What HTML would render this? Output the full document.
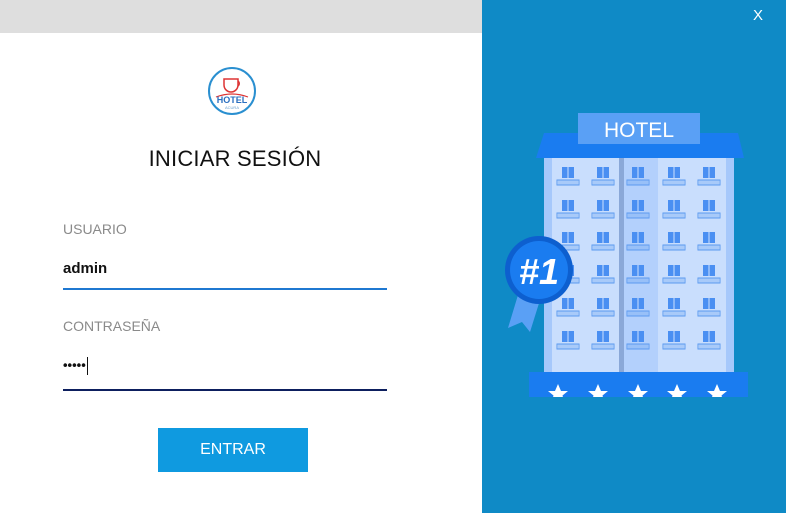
<!DOCTYPE html>
<html><head><meta charset="utf-8"><style>
*{margin:0;padding:0;box-sizing:border-box}
body{width:786px;height:513px;overflow:hidden;background:#fff;font-family:"Liberation Sans",sans-serif;position:relative}
.top{position:absolute;left:0;top:0;width:482px;height:33px;background:#dedede}
.right{position:absolute;left:482px;top:0;width:304px;height:513px;background:#0f8ac6}
.x{position:absolute;left:753px;top:7px;color:#fff;font-size:15px}
h1{position:absolute;left:0;width:470px;text-align:center;top:146px;font-weight:normal;font-size:22px;color:#111;letter-spacing:0.2px}
.lbl{position:absolute;left:63px;font-size:14px;color:#8a8a8a}
.val{position:absolute;left:63px;font-size:15px;font-weight:bold;color:#111}
.line{position:absolute;left:63px;width:324px;height:2px}
.btn{position:absolute;left:158px;top:428px;width:150px;height:44px;background:#0f9ae0;color:#fff;font-size:16px;text-align:center;line-height:44px}
</style></head><body>
<div class="top"></div>
<svg style="position:absolute;left:207px;top:66px" width="50" height="50" viewBox="0 0 50 50">
<circle cx="25" cy="25" r="23" fill="#fff" stroke="#2a8fd0" stroke-width="2"/>
<path d="M17 13 h14 v6 a7 7 0 0 1 -14 0z" fill="none" stroke="#d33" stroke-width="1.5"/>
<path d="M31 15 a3 3 0 0 1 0 5" fill="none" stroke="#d33" stroke-width="1.3"/>
<path d="M9 31 q16 -6 32 0" fill="none" stroke="#d33" stroke-width="1.2"/>
<text x="25" y="37" text-anchor="middle" font-size="9" font-weight="bold" fill="#2a6fc0" font-family="Liberation Sans">HOTEL</text>
<text x="25" y="43" text-anchor="middle" font-size="4" fill="#6aa0d0" font-family="Liberation Sans">ACURA</text>
</svg>
<h1>INICIAR SESIÓN</h1>
<div class="lbl" style="top:221px">USUARIO</div>
<div class="val" style="top:260px">admin</div>
<div class="line" style="top:288px;background:#1f78d1"></div>
<div class="lbl" style="top:318px">CONTRASEÑA</div>
<div class="val" style="top:357px;font-size:13px">•••••<span style="display:inline-block;width:1px;height:18px;background:#111;vertical-align:middle;margin-left:1px"></span></div>
<div class="line" style="top:389px;background:#0d1f5e"></div>
<div class="btn">ENTRAR</div>
<div class="right"></div>
<div class="x">X</div>
<svg style="position:absolute;left:482px;top:0" width="304" height="513">
<defs>
<g id="w"><rect x="-6" y="0" width="12" height="11" fill="#4a8ff2"/><rect x="-0.5" y="0" width="1" height="11" fill="#cfe0ff"/><rect x="-11" y="13" width="22" height="5" fill="none" stroke="#5b9af0" stroke-width="1"/><path d="M-9 13v5M-7 13v5M-5 13v5M-3 13v5M-1 13v5M1 13v5M3 13v5M5 13v5M7 13v5M9 13v5" stroke="#5b9af0" stroke-width="0.6"/></g>
<g id="r"><use href="#w" x="86"/><use href="#w" x="121"/><use href="#w" x="156"/><use href="#w" x="192"/><use href="#w" x="227"/></g>
<path id="s" d="M0 -10 L3 -3 L10 -3 L4.5 1.5 L6.5 9 L0 4.5 L-6.5 9 L-4.5 1.5 L-10 -3 L-3 -3 Z" fill="#fff"/>
</defs>
<path d="M62 133 H256 L262 158 H54 Z" fill="#1a7cf0"/>
<rect x="96" y="113" width="122" height="31" fill="#5aa0f5"/>
<text x="157" y="137" text-anchor="middle" fill="#fff" font-size="21" font-family="Liberation Sans">HOTEL</text>
<rect x="62" y="158" width="190" height="214" fill="#a6c8fb"/>
<rect x="70" y="158" width="174" height="214" fill="#c9defd"/>
<rect x="137" y="158" width="5" height="214" fill="#8aa8d8"/>
<rect x="142" y="158" width="34" height="214" fill="#b3d0fc"/>
<use href="#r" y="167"/><use href="#r" y="200"/><use href="#r" y="232"/><use href="#r" y="265"/><use href="#r" y="298"/><use href="#r" y="331"/>
<rect x="47" y="372" width="219" height="25" fill="#1a7cf0"/>
<svg x="47" y="372" width="219" height="25" overflow="hidden">
<use href="#s" x="29" y="22"/><use href="#s" x="69" y="22"/><use href="#s" x="109" y="22"/><use href="#s" x="148" y="22"/><use href="#s" x="188" y="22"/>
</svg>
<path d="M36 295 L26 328 L40 322 L48 332 L58 300 Z" fill="#5aa0f5"/>
<circle cx="57" cy="270" r="34" fill="#0d5fcf"/>
<circle cx="57" cy="270" r="29" fill="#1a7cf0"/>
<text x="57" y="284" text-anchor="middle" fill="#fff" font-size="36" font-weight="bold" font-style="italic" font-family="Liberation Sans">#1</text>
</svg>
</body></html>
